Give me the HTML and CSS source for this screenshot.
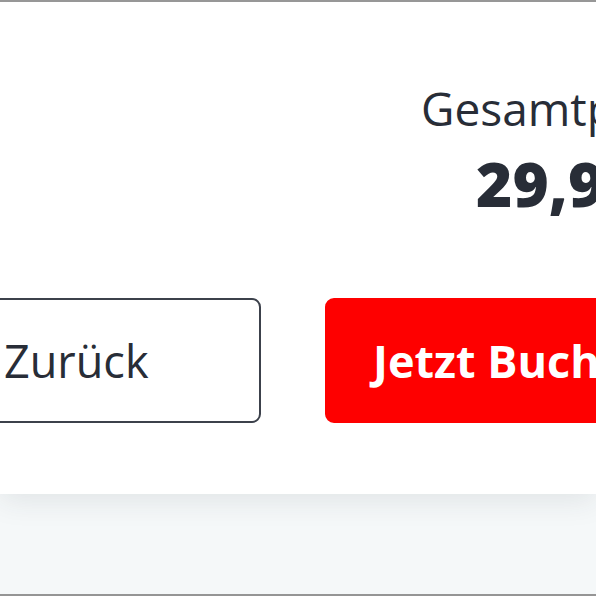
FILE: index.html
```html
<!DOCTYPE html>
<html lang="de">
<head>
<meta charset="utf-8">
<title>Buchung</title>
<link rel="stylesheet" href="styles.css">
</head>
<body>
<div class="frame">
  <section class="card">
    <div class="card-inner">
      <div class="summary">
        <div class="label">Gesamtpreis</div>
        <div class="price">29,99 €</div>
      </div>
      <div class="actions">
        <button class="btn btn-secondary" type="button">Zurück</button>
        <button class="btn btn-primary" type="button">Jetzt Buchen</button>
      </div>
    </div>
  </section>
</div>
</body>
</html>
```

FILE: styles.css
```css
html, body {
  margin: 0;
  padding: 0;
}
body {
  width: 596px;
  height: 596px;
  overflow: hidden;
  background: #f5f8f9;
  font-family: "Open Sans", "Liberation Sans", sans-serif;
  color: #282d37;
}
.frame {
  box-sizing: border-box;
  height: 596px;
  border-top: 2px solid #979797;
  border-bottom: 2px solid #959595;
  overflow: hidden;
}
.card {
  background: #ffffff;
  height: 492px;
  box-sizing: border-box;
  padding-top: 78px;
  box-shadow: 0 6px 28px rgba(40, 45, 55, 0.10);
}
.card-inner {
  width: 737px;
  margin-left: -44px;
}
.summary {
  text-align: right;
}
.label {
  font-size: 46px;
  line-height: 56px;
  font-weight: 400;
}
.price {
  margin-top: 11px;
  font-size: 62px;
  line-height: 72px;
  font-weight: 800;
}
.actions {
  display: flex;
  gap: 64px;
  margin-top: 79px;
}
.btn {
  box-sizing: border-box;
  width: 305px;
  height: 125px;
  flex: none;
  display: flex;
  align-items: center;
  padding: 0 0 0 46px;
  margin: 0;
  border-radius: 9px;
  font-family: "Open Sans", "Liberation Sans", sans-serif;
  font-size: 45px;
  line-height: 56px;
  white-space: nowrap;
  cursor: pointer;
}
.btn-secondary {
  background: #ffffff;
  border: 2px solid #3c414b;
  color: #282d37;
  font-weight: 400;
}
.btn-primary {
  background: #fe0000;
  border: 2px solid #fe0000;
  color: #ffffff;
  font-weight: 700;
  width: 420px;
}
```
